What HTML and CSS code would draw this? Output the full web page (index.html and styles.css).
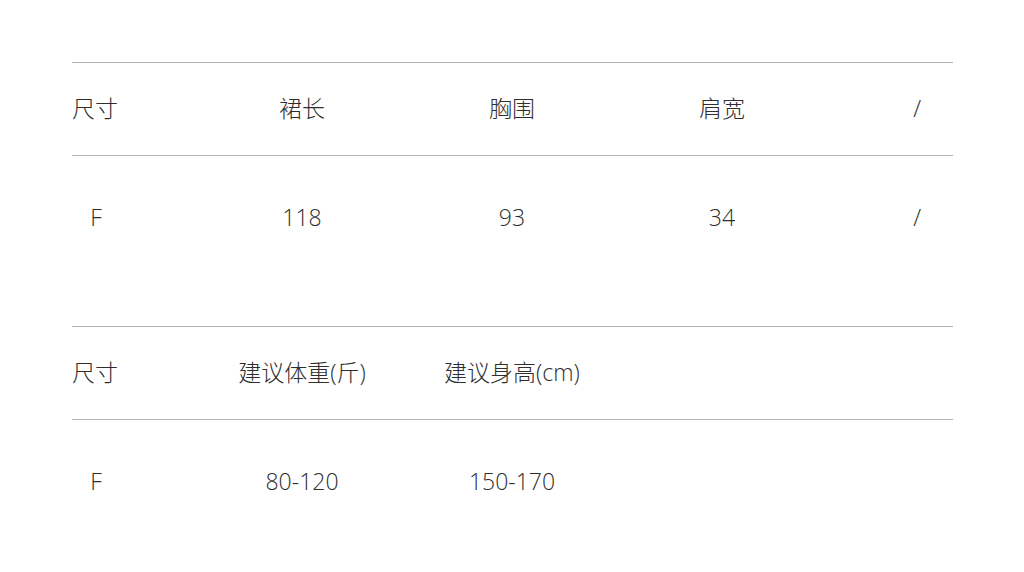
FILE: index.html
```html
<!DOCTYPE html>
<html lang="zh-CN">
<head>
<meta charset="utf-8">
<title>尺码表</title>
<link rel="stylesheet" href="styles.css">
</head>
<body>
<div class="sheet">
  <section class="table">
    <div class="row head">
      <div class="cell first"><span>尺寸</span></div>
      <div class="cell">裙长</div>
      <div class="cell">胸围</div>
      <div class="cell">肩宽</div>
      <div class="cell last">/</div>
    </div>
    <div class="row data tall">
      <div class="cell first"><span class="size">F</span></div>
      <div class="cell">118</div>
      <div class="cell">93</div>
      <div class="cell">34</div>
      <div class="cell last">/</div>
    </div>
  </section>
  <section class="table">
    <div class="row head">
      <div class="cell first"><span>尺寸</span></div>
      <div class="cell">建议体重(斤)</div>
      <div class="cell">建议身高(cm)</div>
      <div class="cell"></div>
      <div class="cell last"></div>
    </div>
    <div class="row data">
      <div class="cell first"><span class="size">F</span></div>
      <div class="cell">80-120</div>
      <div class="cell">150-170</div>
      <div class="cell"></div>
      <div class="cell last"></div>
    </div>
  </section>
</div>
</body>
</html>
```

FILE: styles.css
```css
html, body {
  margin: 0;
  padding: 0;
  background: #ffffff;
}

body {
  font-family: "Open Sans", "Noto Sans CJK SC", sans-serif;
  color: #2e2e2e;
  font-size: 23px;
}

.sheet {
  width: 881px;
  margin-left: 72px;
  padding-top: 62px;
}

.table {
  border-top: 1px solid #b4b4b4;
}

.row {
  display: grid;
  grid-template-columns: 125px 210px 210px 210px 126px;
  line-height: 28px;
}

.row.head {
  height: 93px;
  align-items: center;
  padding-bottom: 2px;
  box-sizing: border-box;
  border-bottom: 1px solid #b4b4b4;
}

.row.data {
  height: 154px;
  align-items: start;
  padding-top: 47px;
  box-sizing: border-box;
}

.row.data.tall {
  height: 170px;
}

.cell {
  text-align: center;
  font-family: "Open Sans", "Noto Sans CJK SC", sans-serif;
  font-weight: 300;
  font-size: 23px;
}

.cell.first {
  text-align: left;
}

.cell.first .size {
  display: inline-block;
  width: 48px;
  text-align: center;
}

.cell.last {
  text-align: right;
  padding-right: 32px;
}
```
